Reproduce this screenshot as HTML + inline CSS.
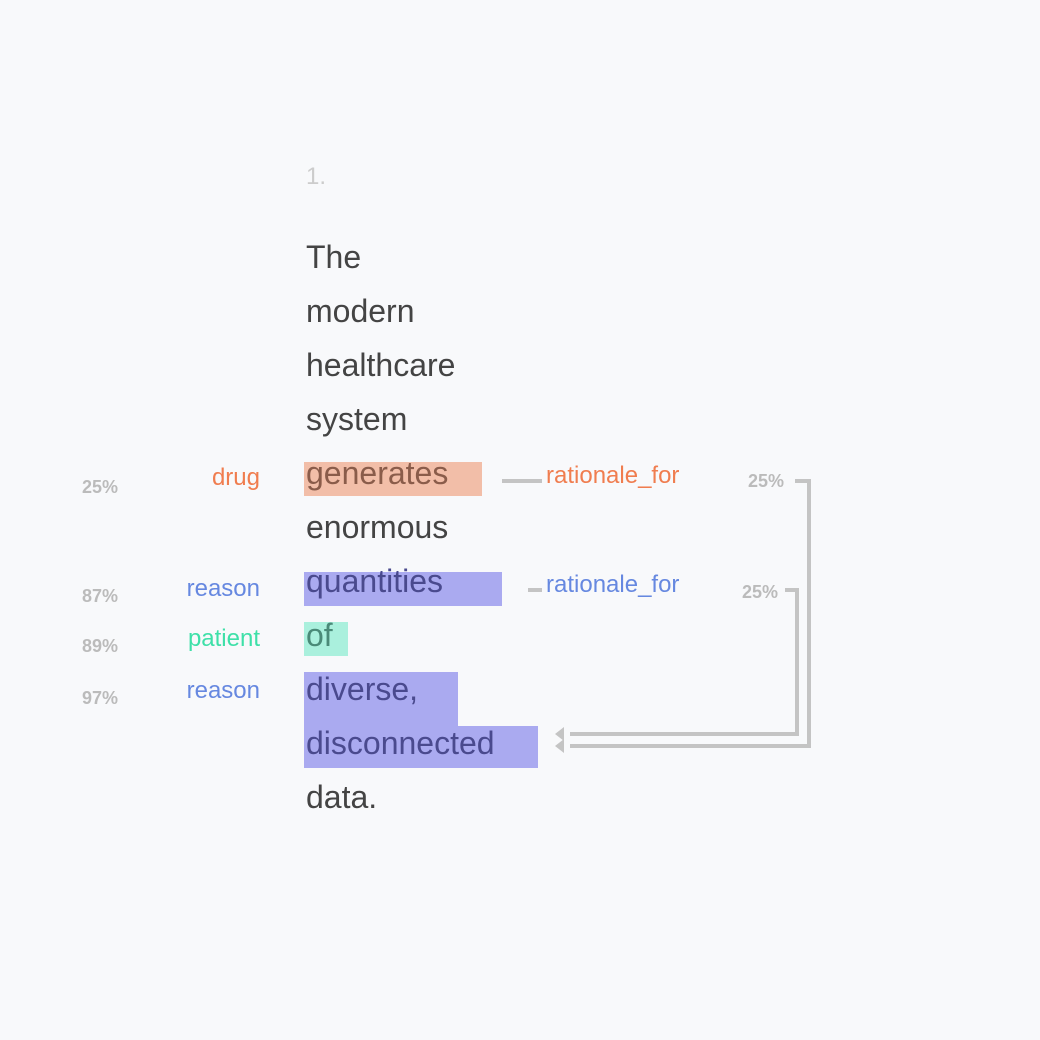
<!DOCTYPE html>
<html><head><style>
body{margin:0;width:1040px;height:1040px;background:#f8f9fb;font-family:"Liberation Sans",Helvetica,Arial,sans-serif;position:relative;overflow:hidden}
.a{position:absolute;white-space:nowrap}
.w{font-size:32px;line-height:34px;color:#444;left:306px}
.h{position:absolute}
.l{font-size:24px;line-height:24px;text-align:right;right:780px}
.p{font-size:18px;line-height:18px;font-weight:bold;color:#bbb}
.r{font-size:24px;line-height:24px;left:546px}
</style></head><body>
<div class="h" style="left:304px;top:462px;width:178px;height:34px;background:#f2bea8"></div>
<div class="h" style="left:304px;top:572px;width:198px;height:34px;background:#aaaaf0"></div>
<div class="h" style="left:304px;top:622px;width:44px;height:34px;background:#aaf0dd"></div>
<div class="h" style="left:304px;top:672px;width:154px;height:56px;background:#aaaaf0"></div>
<div class="h" style="left:304px;top:726px;width:234px;height:42px;background:#aaaaf0"></div>

<div class="a" style="left:306px;top:165px;font-size:24px;line-height:24px;color:#ccc">1.</div>
<div class="a w" style="top:240px">The</div>
<div class="a w" style="top:294px">modern</div>
<div class="a w" style="top:348px">healthcare</div>
<div class="a w" style="top:402px">system</div>
<div class="a w" style="top:456px;color:#8a5c4a">generates</div>
<div class="a w" style="top:510px">enormous</div>
<div class="a w" style="top:564px;color:#4a4a8e">quantities</div>
<div class="a w" style="top:618px;color:#4a8a78">of</div>
<div class="a w" style="top:672px;color:#4a4a8e">diverse,</div>
<div class="a w" style="top:726px;color:#4a4a8e">disconnected</div>
<div class="a w" style="top:780px">data.</div>

<div class="a l" style="top:466px;color:#f07d4f">drug</div>
<div class="a l" style="top:577px;color:#6688e0">reason</div>
<div class="a l" style="top:627px;color:#3ee0a8">patient</div>
<div class="a l" style="top:679px;color:#6688e0">reason</div>

<div class="a p" style="left:82px;top:478px">25%</div>
<div class="a p" style="left:82px;top:587px">87%</div>
<div class="a p" style="left:82px;top:637px">89%</div>
<div class="a p" style="left:82px;top:689px">97%</div>

<div class="a r" style="top:464px;color:#f07d4f">rationale_for</div>
<div class="a r" style="top:573px;color:#6688e0">rationale_for</div>
<div class="a p" style="left:748px;top:472px">25%</div>
<div class="a p" style="left:742px;top:583px">25%</div>

<svg class="a" style="left:0;top:0" width="1040" height="1040">
<g stroke="#c4c4c4" stroke-width="4" fill="none">
<path d="M502 481H542"/>
<path d="M528 590H542"/>
<path d="M795 481H809V746H570"/>
<path d="M785 590H797V734H570"/>
</g>
<g fill="#c4c4c4">
<path d="M555 734L564 727V741Z"/>
<path d="M555 746L564 739V753Z"/>
</g>
</svg>
</body></html>
